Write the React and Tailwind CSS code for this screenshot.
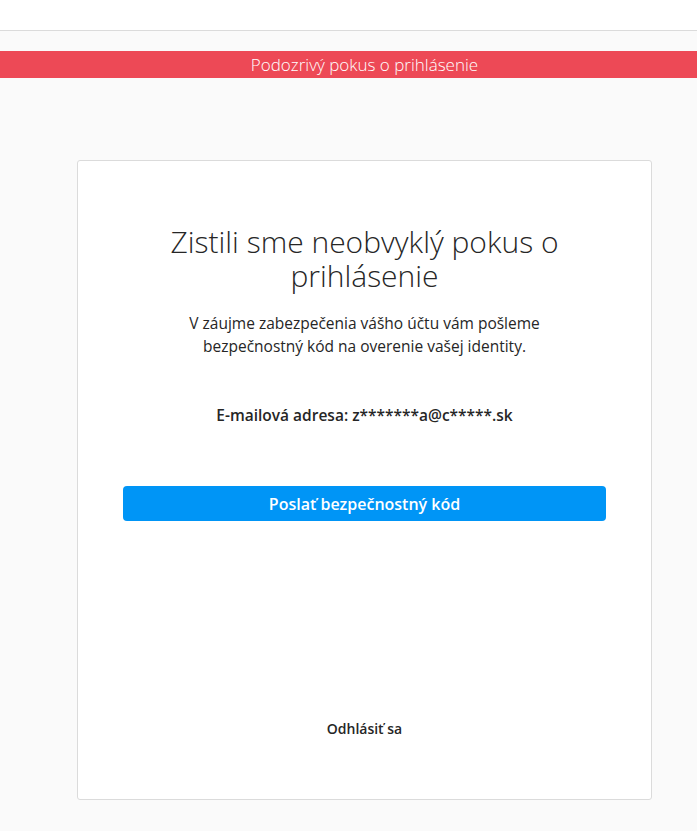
import React from 'react';

export default function App() {
  return (
    <div className="min-h-screen bg-[#fafafa] text-[#262626]" style={{ fontFamily: '"Open Sans", "Noto Sans", sans-serif' }}>
      {/* top nav strip */}
      <div className="h-[31px] bg-white border-b border-[#dbdbdb]"></div>

      {/* warning banner */}
      <div className="mt-[20px] h-[27px] bg-[#ed4956] flex items-center justify-center pl-[32px]">
        <span className="text-white text-[17px] font-light leading-none">Podozrivý pokus o prihlásenie</span>
      </div>

      {/* card */}
      <div className="mt-[82px] ml-[77px] w-[575px] h-[640px] bg-white border border-[#dbdbdb] rounded-[3px] flex flex-col items-center px-[45px] pt-[64px]">
        <h1 className="text-[30px] font-light leading-[34px] text-center text-[#262626] px-[40px]">
          Zistili sme neobvyklý pokus o prihlásenie
        </h1>
        <p className="mt-[19px] text-[15.5px] leading-[23px] text-center text-[#262626] px-[40px]">
          V záujme zabezpečenia vášho účtu vám pošleme bezpečnostný kód na overenie vašej identity.
        </p>
        <p className="mt-[46px] text-[15.5px] font-semibold leading-[22px] text-center">
          E-mailová adresa: z*******a@c*****.sk
        </p>
        <button className="mt-[60px] w-full h-[35px] bg-[#0095f6] rounded-[4px] text-white text-[16px] font-semibold">
          Poslať bezpečnostný kód
        </button>
        <div className="flex-1"></div>
        <button className="mb-[60px] text-[14px] font-semibold text-[#262626]">Odhlásiť sa</button>
      </div>
    </div>
  );
}
